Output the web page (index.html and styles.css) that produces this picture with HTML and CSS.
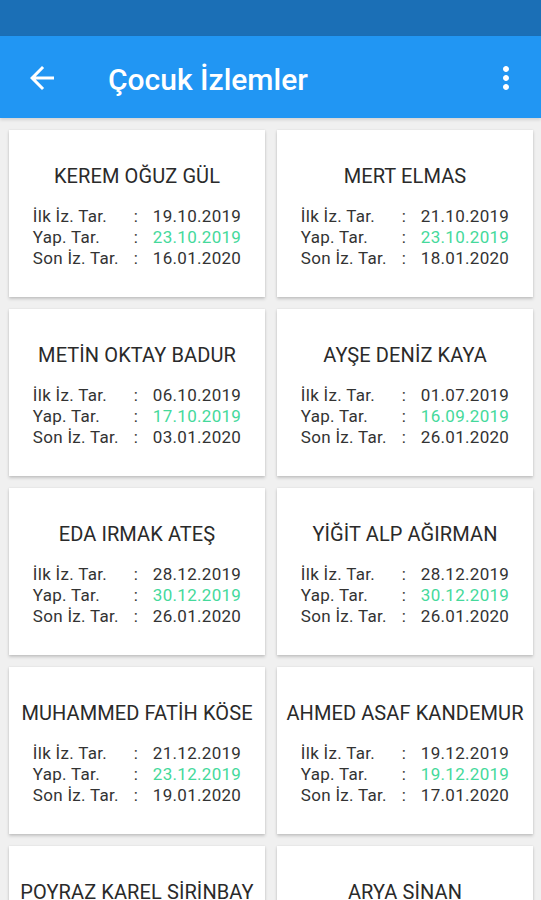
FILE: index.html
```html
<!DOCTYPE html>
<html lang="tr">
<head>
  <meta charset="UTF-8" />
  <meta name="viewport" content="width=device-width, initial-scale=1" />
  <title>Çocuk İzlemler</title>
  <link rel="stylesheet" href="styles.css">
</head>
<body>
  <div class="status-bar"></div>
  <header class="app-bar">
    <button class="icon-btn back-btn" aria-label="Geri">
      <svg viewBox="0 0 24 24" width="36" height="36"><path fill="#fff" d="M20 11H7.83l5.59-5.59L12 4l-8 8 8 8 1.41-1.41L7.83 13H20v-2z"/></svg>
    </button>
    <h1 class="title">Çocuk İzlemler</h1>
    <button class="icon-btn menu-btn" aria-label="Menü">
      <svg viewBox="0 0 24 24" width="36" height="36"><path fill="#fff" d="M12 8c1.1 0 2-.9 2-2s-.9-2-2-2-2 .9-2 2 .9 2 2 2zm0 2c-1.1 0-2 .9-2 2s.9 2 2 2 2-.9 2-2-.9-2-2-2zm0 6c-1.1 0-2 .9-2 2s.9 2 2 2 2-.9 2-2-.9-2-2-2z"/></svg>
    </button>
  </header>

  <main class="list">
    <div class="card">
      <div class="name">KEREM OĞUZ GÜL</div>
      <div class="dates">
        <span>İlk İz. Tar.</span><span>:</span><span>19.10.2019</span>
        <span>Yap. Tar.</span><span>:</span><span class="done">23.10.2019</span>
        <span>Son İz. Tar.</span><span>:</span><span>16.01.2020</span>
      </div>
    </div>
    <div class="card">
      <div class="name">MERT ELMAS</div>
      <div class="dates">
        <span>İlk İz. Tar.</span><span>:</span><span>21.10.2019</span>
        <span>Yap. Tar.</span><span>:</span><span class="done">23.10.2019</span>
        <span>Son İz. Tar.</span><span>:</span><span>18.01.2020</span>
      </div>
    </div>
    <div class="card">
      <div class="name">METİN OKTAY BADUR</div>
      <div class="dates">
        <span>İlk İz. Tar.</span><span>:</span><span>06.10.2019</span>
        <span>Yap. Tar.</span><span>:</span><span class="done">17.10.2019</span>
        <span>Son İz. Tar.</span><span>:</span><span>03.01.2020</span>
      </div>
    </div>
    <div class="card">
      <div class="name">AYŞE DENİZ KAYA</div>
      <div class="dates">
        <span>İlk İz. Tar.</span><span>:</span><span>01.07.2019</span>
        <span>Yap. Tar.</span><span>:</span><span class="done">16.09.2019</span>
        <span>Son İz. Tar.</span><span>:</span><span>26.01.2020</span>
      </div>
    </div>
    <div class="card">
      <div class="name">EDA IRMAK ATEŞ</div>
      <div class="dates">
        <span>İlk İz. Tar.</span><span>:</span><span>28.12.2019</span>
        <span>Yap. Tar.</span><span>:</span><span class="done">30.12.2019</span>
        <span>Son İz. Tar.</span><span>:</span><span>26.01.2020</span>
      </div>
    </div>
    <div class="card">
      <div class="name">YİĞİT ALP AĞIRMAN</div>
      <div class="dates">
        <span>İlk İz. Tar.</span><span>:</span><span>28.12.2019</span>
        <span>Yap. Tar.</span><span>:</span><span class="done">30.12.2019</span>
        <span>Son İz. Tar.</span><span>:</span><span>26.01.2020</span>
      </div>
    </div>
    <div class="card">
      <div class="name">MUHAMMED FATİH KÖSE</div>
      <div class="dates">
        <span>İlk İz. Tar.</span><span>:</span><span>21.12.2019</span>
        <span>Yap. Tar.</span><span>:</span><span class="done">23.12.2019</span>
        <span>Son İz. Tar.</span><span>:</span><span>19.01.2020</span>
      </div>
    </div>
    <div class="card">
      <div class="name">AHMED ASAF KANDEMUR</div>
      <div class="dates">
        <span>İlk İz. Tar.</span><span>:</span><span>19.12.2019</span>
        <span>Yap. Tar.</span><span>:</span><span class="done">19.12.2019</span>
        <span>Son İz. Tar.</span><span>:</span><span>17.01.2020</span>
      </div>
    </div>
    <div class="card">
      <div class="name">POYRAZ KAREL SİRİNBAY</div>
    </div>
    <div class="card">
      <div class="name">ARYA SİNAN</div>
    </div>
  </main>
</body>
</html>
```

FILE: styles.css
```css
body {
  margin: 0;
  font-family: Roboto, "Noto Sans", sans-serif;
  background: #f0f0f0;
  overflow: hidden;
}
.status-bar {
  height: 36px;
  background: #1b6fb6;
}
.app-bar {
  height: 82px;
  box-sizing: border-box;
  background: #2196f3;
  display: flex;
  align-items: center;
  padding: 2px 17px 0 24px;
  box-shadow: 0 2px 3px rgba(0,0,0,0.12);
}
.icon-btn {
  border: none;
  background: none;
  padding: 0;
  width: 36px;
  height: 36px;
  cursor: pointer;
}
.icon-btn svg {
  display: block;
}
.title {
  flex: 1;
  margin: 0 0 0 48px;
  padding-top: 4px;
  color: #fff;
  font-size: 30px;
  line-height: 36px;
  font-weight: 500;
}
.list {
  display: grid;
  grid-template-columns: 1fr 1fr;
  gap: 12px 12px;
  padding: 12px 8px 0 9px;
}
.card {
  background: #fff;
  min-height: 166px;
  box-sizing: border-box;
  padding: 34px 0 28px;
  box-shadow: 0 2px 3px rgba(0,0,0,0.18), 0 0 2px rgba(0,0,0,0.08);
}
.name {
  text-align: center;
  font-size: 20px;
  line-height: 24px;
  color: #2a2a2a;
  letter-spacing: 0.1px;
  white-space: nowrap;
}
.dates {
  display: grid;
  grid-template-columns: 101px 19px auto;
  justify-content: center;
  margin-top: 18px;
  font-size: 17px;
  line-height: 21px;
  color: #333;
  letter-spacing: 0.3px;
}
.done {
  color: #45d99b;
}
```
